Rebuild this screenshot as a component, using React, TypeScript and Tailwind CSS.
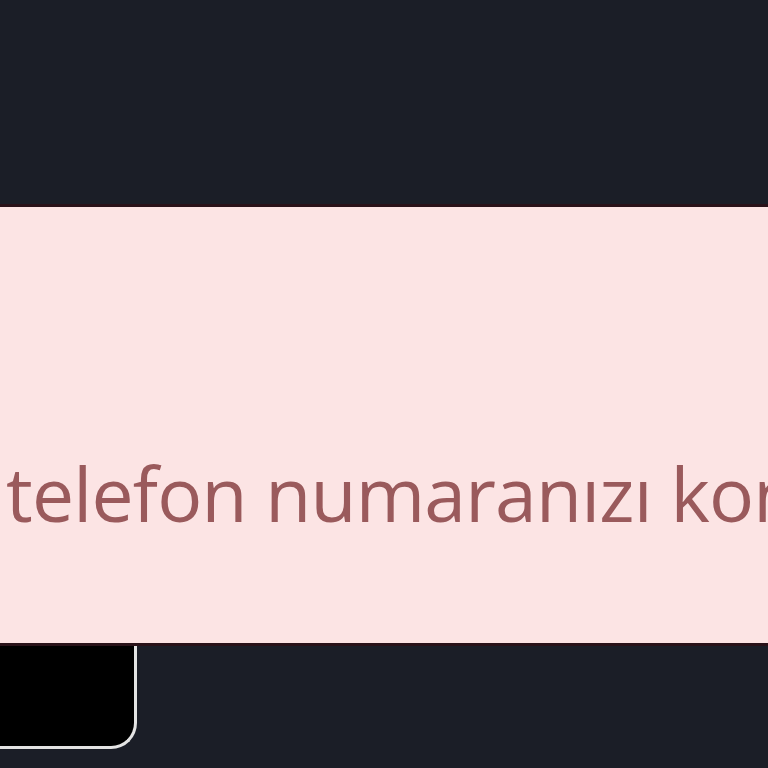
export default function App() {
  return (
    <div className="h-[768px] w-[768px] overflow-hidden bg-[#1b1e27] flex flex-col font-['Open_Sans',sans-serif]">
      <div className="h-[204px] shrink-0" />
      <div className="h-[442px] shrink-0 bg-[#fce4e4] border-y-[3px] border-[#2a1219] flex items-end overflow-hidden pb-[112px]">
        <p className="whitespace-nowrap pl-[6px] text-[75px] leading-none tracking-[-0.8px] text-[#9a5a5c]">
          telefon numaranızı kontrol edin.
        </p>
      </div>
      <div className="flex-1 flex items-start">
        <div className="h-[103px] w-[137px] bg-black border-r-[3px] border-b-[3px] border-[#e4e4e4] rounded-br-[26px]" />
      </div>
    </div>
  )
}
